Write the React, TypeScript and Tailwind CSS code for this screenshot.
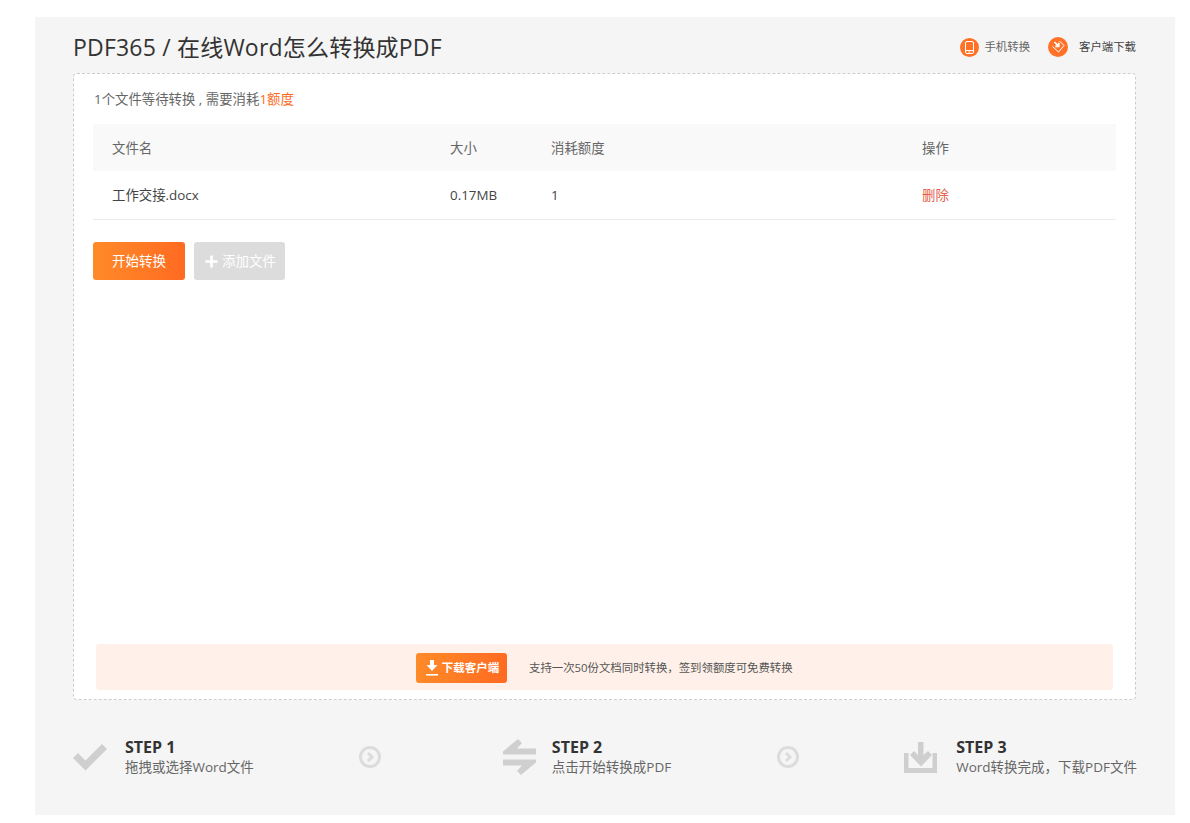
import React from "react";

const font = { fontFamily: '"Open Sans", "Noto Sans CJK SC", sans-serif' };

function Chevron() {
  return (
    <svg width="22" height="22" viewBox="0 0 22 22" fill="none">
      <circle cx="11" cy="11" r="9.5" stroke="#dcdcdc" strokeWidth="3" />
      <path d="M9 7l4 4-4 4" stroke="#dcdcdc" strokeWidth="3" />
    </svg>
  );
}

function Step({ icon, title, desc, gap, extra = "" }: { icon: React.ReactNode; title: string; desc: string; gap: string; extra?: string }) {
  return (
    <div className={`flex items-center ${gap} ${extra}`}>
      {icon}
      <div className="flex flex-col">
        <span className="text-[16px] leading-[20px] font-bold text-[#333]">{title}</span>
        <span className="text-[13.5px] leading-[20px] text-[#666] whitespace-nowrap">{desc}</span>
      </div>
    </div>
  );
}

const colClass = "grid grid-cols-[338px_101px_371px_1fr] pl-[19px] items-center text-[13.4px]";

export default function App() {
  return (
    <div className="bg-white h-[823px] pt-[17px] pl-[35px] overflow-hidden" style={font}>
      <div className="w-[1140px] h-[798px] bg-[#f5f5f5] pl-[38px] pr-[39px] flex flex-col">
        <header className="h-[56px] flex items-center justify-between shrink-0">
          <h1 className="text-[23px] tracking-[0.2px] text-[#333] font-normal leading-none pt-[4px]">PDF365 / 在线Word怎么转换成PDF</h1>
          <div className="flex items-center text-[11.4px] pt-[4px]">
            <svg width="19" height="19" viewBox="0 0 19 19" className="mr-[5px]">
              <circle cx="9.5" cy="9.5" r="9.5" fill="#ff7227" />
              <rect x="5.5" y="3.5" width="8" height="12" rx="1.5" fill="none" stroke="#fff" strokeWidth="1" />
              <path d="M5.5 12.5h8M8.500 14h2" stroke="#fff" strokeWidth="1" />
            </svg>
            <span className="text-[#666]">手机转换</span>
            <svg width="20" height="20" viewBox="0 0 20 20" className="ml-[18px] mr-[11px]">
              <circle cx="10" cy="10" r="10" fill="#ff7227" />
              <path d="M4.500 9.500l6 5.500 5.500-6.500-4.500-4.500" fill="none" stroke="#fff" strokeWidth="1" />
              <path d="M6.500 5l3.800 3.800M10.800 5.800v3.500H7.300" fill="none" stroke="#fff" strokeWidth="1.700" />
            </svg>
            <span className="text-[#444]">客户端下载</span>
          </div>
        </header>

        <main className="h-[627px] bg-white border border-dashed border-[#ccc] rounded-[4px] px-[19px] flex flex-col shrink-0">
          <p className="h-[50px] flex items-center text-[13.4px] text-[#666] shrink-0 pt-[1px] pl-[1px]">
            1个文件等待转换 , 需要消耗<span className="text-[#ff6a22]">1额度</span>
          </p>
          <div className={`${colClass} h-[47px] pt-[1px] bg-[#f9f9f9] text-[#666]`}>
            <span>文件名</span>
            <span>大小</span>
            <span>消耗额度</span>
            <span>操作</span>
          </div>
          <div className={`${colClass} h-[49px] border-b border-[#ebebeb] text-[#444]`}>
            <span>工作交接.docx</span>
            <span>0.17MB</span>
            <span>1</span>
            <span className="text-[#e4604a]">删除</span>
          </div>
          <div className="flex gap-[9px] mt-[22px]">
            <button className="w-[92px] h-[38px] rounded-[3px] bg-gradient-to-r from-[#ff8a28] to-[#ff6a22] text-white text-[13.5px]">
              开始转换
            </button>
            <button className="w-[91px] h-[38px] rounded-[3px] bg-[#dcdcdc] text-white text-[13.5px] flex items-center justify-center gap-[4px] pl-[2px]">
              <svg width="13" height="13" viewBox="0 0 13 13">
                <path d="M6.500 0.500v12M0.500 6.500h12" stroke="#fff" strokeWidth="2.600" />
              </svg>
              添加文件
            </button>
          </div>
          <div className="mt-auto mb-[9px] mx-[3px] h-[46px] bg-[#fff1e9] rounded-[3px] flex items-center pl-[320px]">
            <button className="w-[91px] h-[30px] mt-[2px] rounded-[3px] bg-gradient-to-r from-[#ff8a28] to-[#ff6a22] text-white text-[11.5px] font-semibold flex items-center justify-center gap-[4px] pl-[2px]">
              <svg width="12" height="16" viewBox="0 0 12 16">
                <path d="M4 0h4v5h3.500L6 11 .5 5H4z" fill="#fff" />
                <rect x="0" y="14" width="12" height="1.600" fill="#fff" />
              </svg>
              下载客户端
            </button>
            <span className="ml-[22px] pt-[1px] text-[11.4px] text-[#555]">支持一次50份文档同时转换，签到领额度可免费转换</span>
          </div>
        </main>

        <footer className="flex items-center justify-between h-[84px] mt-[15px] -mr-[1px] shrink-0">
          <Step
            gap="gap-[18px]"
            title="STEP 1"
            desc="拖拽或选择Word文件"
            icon={
              <svg width="34" height="28" viewBox="0 0 34 28">
                <path d="M0 15l5-5 7.500 7.500L29 1l5 5-21.500 21.500z" fill="#cfcfcf" />
              </svg>
            }
          />
          <Chevron />
          <Step
            gap="gap-[16px]"
            extra="ml-[16px]"
            title="STEP 2"
            desc="点击开始转换成PDF"
            icon={
              <svg width="33" height="36" viewBox="0 0 33 36">
                <path d="M15 0l4 4-5 5.500h19v6H0v-3z" fill="#cfcfcf" />
                <path d="M0 20.500h33v3L18 36l-4-4 5-5.500H0z" fill="#cfcfcf" />
              </svg>
            }
          />
          <Chevron />
          <Step
            gap="gap-[19px]"
            title="STEP 3"
            desc="Word转换完成，下载PDF文件"
            icon={
              <svg width="33" height="31" viewBox="0 0 33 31">
                <path d="M14 0h5.500v13l4.500-4 4 4-11 11.500L6 13l4-4 4 4z" fill="#cfcfcf" />
                <path d="M0 11h4.500v15h24V11H33v20H0z" fill="#cfcfcf" />
              </svg>
            }
          />
        </footer>
      </div>
    </div>
  );
}
